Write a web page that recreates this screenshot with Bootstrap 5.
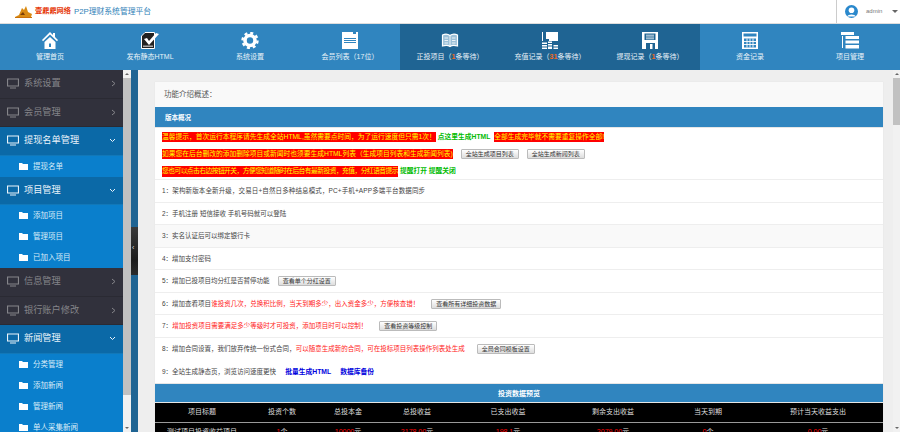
<!DOCTYPE html>
<html lang="zh"><head><meta charset="utf-8">
<link href="https://cdn.jsdelivr.net/npm/bootstrap@5.3.0/dist/css/bootstrap.min.css" rel="stylesheet">
<style>
html,body{height:432px;overflow:hidden}
body{font:7.5px/1.2 "Liberation Sans","Noto Sans CJK SC",sans-serif;color:#333;background:#eee;position:relative}
.top-bar{height:24px;background:#fff;border-bottom:1px solid #ddd;padding-left:15px}
.brand-a{color:#e63a0a;font-size:7.2px;font-weight:700;margin-left:3px}
.brand-b{color:#2f7fb8;font-size:7.8px;margin-left:3px}
.user-box{width:64px;height:23px;border-left:1px solid #ccc;color:#777;font-size:6px;padding-left:8px}
.caret-dn{width:0;height:0;border:3px solid transparent;border-top:3px solid #666;margin:3px 0 0 10px}
.main-nav{height:46px;background:#3085bf}
.nav-cell{width:100px;height:46px;color:#e8f2f8;font-size:7px;padding-top:8px}
.nav-on{background:#1f6493}
.nav-cell svg{display:block;height:17px;width:18px;margin-bottom:4px}
.hot{color:#f26a1b;font-weight:700}
.body-wrap{height:362px}
.side-col{width:123px;overflow:hidden;flex:none}
.sec{height:28.5px;background:#31313c;color:#85858a;font-size:9.2px;padding:0 7px;border-bottom:1px solid #2a2a33}
.sec.open{background:#0b69a7;color:#e9f3fa;border-bottom-color:#1278b8}
.sec svg{flex:none}
.sec-ico{margin-right:5px}
.subs{background:#0a7fcc;color:#d8ecf8;font-size:7.5px}
.sub-item{height:21px;padding-left:19px}
.fold{margin-right:5px}
.sb-v{width:8px;background:#f1f1f1;flex:none;position:relative}
.sb-thumb{position:absolute;left:0;right:0;top:8px;height:317px;background:#c1c1c1}
.sb-page{width:7px;height:362px;background:#f1f1f1;flex:none;position:relative}
.sb-page .sb-thumb{height:47px}
.arr-up,.arr-dn{position:absolute;left:2px;width:0;height:0;border:2px solid transparent}
.arr-up{top:1px;border-bottom:2px solid #666}
.arr-dn{bottom:1px;border-top:2px solid #666}
.strip{width:7px;background:linear-gradient(#1f6493 0,#1f6493 157px,#3a3a3a 157px,#1c1c1c 190px,#2b2b2b 205px,#1f6493 205px);flex:none;color:#ddd;font-size:7px;position:relative}
.strip-mark{position:absolute;left:1px;top:174px;line-height:1}
.work{flex:1;padding:12px 10px 0 17px;overflow:hidden;min-width:0}
.sheet{background:#fff;box-shadow:0 0 1px #ddd}
.sheet-title{height:25px;background:#f9f9f9;padding:0 9px;font-size:7.5px;color:#555;line-height:25px}
.band{height:21px;background:#3085bf;color:#fff;font-weight:700;font-size:6.5px;padding:0 10px;line-height:21px;border-bottom:1px solid #e6e6e6}
.note{height:17.4px;padding:0 7px;font-size:6.75px;white-space:nowrap}
.note-top{height:52px;border-bottom:1px solid #eee}
.redline{background:#f00;color:#ff0;padding:1px 0}
.tight{letter-spacing:-.54px}
.go{color:#0b0;font-weight:700;margin-left:2px}
.pill{background:linear-gradient(#fff,#ddd);border:1px solid #bbb;color:#333;font-size:6px;height:10px;padding:0 4px;line-height:8px;margin-left:8px;border-radius:1px;display:inline-block;white-space:nowrap}
.pill-far{margin-left:12px}
.row-line{height:22.5px;padding:1px 7px 0;border-bottom:1px solid #eee;font-size:6.5px;color:#444;white-space:nowrap}
.row-alt{background:#f9f9f9}
.no-line{border-bottom:0}
.wide-row{letter-spacing:.12px}
.alert-txt{color:#f22}
.blue-link{color:#00d;font-weight:700;margin-left:9px;font-size:6.8px}
.table-title{height:20px;background:#3085bf;color:#fff;font-weight:700;font-size:7px;text-align:center;line-height:20px;border-top:1px solid #e6e6e6;border-bottom:1px solid #e6e6e6}
.data-tb{width:100%;margin:0;table-layout:fixed;font-size:7px;text-align:center}
.data-tb th{background:#000;color:#ddd;height:20px;font-weight:400;padding:0;vertical-align:middle;border-bottom:1px solid #999}
.data-tb td{height:16px;padding:5px 0 2px;background:#000;color:#ddd}
.data-tb th:nth-child(1){width:94px}.data-tb th:nth-child(2){width:66px}.data-tb th:nth-child(3){width:66px}.data-tb th:nth-child(4){width:72px}
.data-tb th:nth-child(5){width:110px}.data-tb th:nth-child(6){width:100px}.data-tb th:nth-child(7){width:90px}
.rd{color:#f00}
.lnk{color:#38c}
</style></head><body>
<header class="top-bar d-flex align-items-center">
<svg width="17" height="12" viewBox="0 0 17 12" aria-hidden="true"><path d="M0 11 4 9 7 2 9 4 11 0 13 6 17 8 16 11Z" fill="#d98a12"/><path d="M5 9 8 6 10 9Z" fill="#7a3d05"/><path d="M0 11h17v1H0Z" fill="#c9700a"/></svg>
<span class="brand-a">壹鼎鼎网络</span><span class="brand-b">P2P理财系统管理平台</span>
<div class="user-box ms-auto d-flex align-items-center">
<svg width="13" height="13" viewBox="0 0 13 13" class="me-2 flex-shrink-0" aria-hidden="true"><circle cx="6.5" cy="6.5" r="6.5" fill="#2a88cc"/><circle cx="6.5" cy="5.3" r="2.8" fill="#fff"/><path d="M2.2 11.5C3 8.8 10 8.8 10.8 11.5Z" fill="#fff"/></svg>
<span>admin</span><i class="caret-dn"></i></div>
</header>
<nav class="main-nav d-flex">
<div class="nav-cell d-flex flex-column align-items-center"><svg viewBox="0 0 18 17"><path d="M9 0 1 8l1 1.200L9 2.600l7 6.600L17 8l-3-3V1h-2v2Z" fill="#fff"/><path d="M3.500 10 9 5l5.500 5v7h-11Zm4.500 1.500V15h2v-3.500Z" fill="#fff" fill-rule="evenodd"/></svg>管理首页</div>
<div class="nav-cell d-flex flex-column align-items-center"><svg viewBox="0 0 18 17"><path d="M4 .5h9.500v16H.5V4Z" fill="#222" stroke="#fff"/><path d="M3 7l3-1 2 3 7-8 3 1-10 11Z" fill="#fff"/><path d="M2 13.500h10V15H2Z" fill="#aaa"/></svg>发布静态HTML</div>
<div class="nav-cell d-flex flex-column align-items-center"><svg viewBox="0 0 18 17"><circle cx="9" cy="8.500" r="5" fill="none" stroke="#fff" stroke-width="3.600"/><circle cx="9" cy="8.500" r="7.500" fill="none" stroke="#fff" stroke-width="2.400" stroke-dasharray="3 2.890"/></svg>系统设置</div>
<div class="nav-cell d-flex flex-column align-items-center"><svg viewBox="0 0 18 17"><path d="M1 0h11v2h3V0h2v17H1Z" fill="#fff"/><path d="M3 6.500h12M3 8.500h12M3 10.500h12" stroke="#3085bf"/></svg>会员列表（17位）</div>
<div class="nav-cell nav-on d-flex flex-column align-items-center"><svg viewBox="0 0 18 17"><path d="M1.500 3c3-1.500 5.500-1 7.500.5C11 2 13.500 1.500 16.500 3v11c-3-1-5.500-1-7.500.5C7 13 4.500 13 1.500 14Z" fill="#9cc0d8" stroke="#fff" stroke-width="1.200"/><path d="M9 3.500v11M3.500 6h3.500M3.500 8.500h3.500M3.500 11h3.500M11 6h3.500M11 8.500h3.500M11 11h3.500" stroke="#fff" stroke-width=".8"/></svg><span>正投项目（<b class="hot">1</b>条等待）</span></div>
<div class="nav-cell nav-on d-flex flex-column align-items-center"><svg viewBox="0 0 18 17"><path d="M1 0h1v9H1ZM5 0h12v9H8V7H5Z" fill="#fff"/><path d="M1 10.500h5v1.500H1Zm0 2.500h5v1.500H1Zm0 2.500h5V17H1ZM7 9.500h4V11H7Zm0 2.500h4v1.500H7Zm0 2.500h4V17H7ZM12.500 13H17v1.500h-4.500Zm0 2.500H17V17h-4.500Z" fill="#fff"/></svg><span>充值记录（<b class="hot">31</b>条等待）</span></div>
<div class="nav-cell nav-on d-flex flex-column align-items-center"><svg viewBox="0 0 18 17"><path d="M1 0h16v17H1Z" fill="#fff"/><path d="M3.500 1.500h11V8h-11Z" fill="#1f6493"/><path d="M5 3.200h8M5 5h8M5 6.800h8" stroke="#fff" stroke-width=".8"/><path d="M5 11h9v6H5Z" fill="#1f6493"/><path d="M9 12h2.500v5H9Z" fill="#fff"/></svg><span>提现记录（<b class="hot">1</b>条等待）</span></div>
<div class="nav-cell d-flex flex-column align-items-center"><svg viewBox="0 0 18 17"><path d="M1 0h16v17H1Z" fill="#fff"/><path d="M2.500 1.500h13v3h-13Z" fill="#3085bf"/><path d="M3 6.500h12v9H3Z" fill="#3085bf"/><path d="M6 6.500v9M9 6.500v9M12 6.500v9M3 9.500h12M3 12.500h12" stroke="#fff" stroke-width=".9"/></svg>资金记录</div>
<div class="nav-cell d-flex flex-column align-items-center"><svg viewBox="0 0 18 17"><path d="M0 0h13v3H0ZM1 4h1v12H1ZM4.500 4H18v3H4.500Zm0 4.500H18v3H4.500Zm0 4.500H18v3.500H4.500Z" fill="#fff"/></svg>项目管理</div>
</nav>
<div class="body-wrap d-flex">
<aside class="side-col">
<div class="sec d-flex align-items-center"><svg width="12" height="11" viewBox="0 0 12 11" class="sec-ico"><path d="M.5 1h11v7H.5ZM3 10h6" fill="none" stroke="currentColor" stroke-width="1.200"/></svg><span class="flex-grow-1">系统设置</span><svg width="5" height="7" viewBox="0 0 5 7"><path d="m1 1 3 2.500-3 2.500" fill="none" stroke="currentColor"/></svg></div>
<div class="sec d-flex align-items-center"><svg width="12" height="11" viewBox="0 0 12 11" class="sec-ico"><path d="M.5 1h11v7H.5ZM3 10h6" fill="none" stroke="currentColor" stroke-width="1.200"/></svg><span class="flex-grow-1">会员管理</span><svg width="5" height="7" viewBox="0 0 5 7"><path d="m1 1 3 2.500-3 2.500" fill="none" stroke="currentColor"/></svg></div>
<div class="sec open d-flex align-items-center"><svg width="12" height="11" viewBox="0 0 12 11" class="sec-ico"><path d="M.5 1h11v7H.5ZM3 10h6" fill="none" stroke="currentColor" stroke-width="1.200"/></svg><span class="flex-grow-1">提现名单管理</span><svg width="7" height="5" viewBox="0 0 7 5"><path d="m1 1 2.500 2.500L6 1" fill="none" stroke="currentColor"/></svg></div>
<div class="subs"><div class="sub-item d-flex align-items-center"><svg width="9" height="7" viewBox="0 0 9 7" class="fold"><path d="M0 0h3l1 1h5v6H0Z" fill="#fff"/></svg>提现名单</div></div>
<div class="sec open d-flex align-items-center"><svg width="12" height="11" viewBox="0 0 12 11" class="sec-ico"><path d="M.5 1h11v7H.5ZM3 10h6" fill="none" stroke="currentColor" stroke-width="1.200"/></svg><span class="flex-grow-1">项目管理</span><svg width="7" height="5" viewBox="0 0 7 5"><path d="m1 1 2.500 2.500L6 1" fill="none" stroke="currentColor"/></svg></div>
<div class="subs"><div class="sub-item d-flex align-items-center"><svg width="9" height="7" viewBox="0 0 9 7" class="fold"><path d="M0 0h3l1 1h5v6H0Z" fill="#fff"/></svg>添加项目</div><div class="sub-item d-flex align-items-center"><svg width="9" height="7" viewBox="0 0 9 7" class="fold"><path d="M0 0h3l1 1h5v6H0Z" fill="#fff"/></svg>管理项目</div><div class="sub-item d-flex align-items-center"><svg width="9" height="7" viewBox="0 0 9 7" class="fold"><path d="M0 0h3l1 1h5v6H0Z" fill="#fff"/></svg>已加入项目</div></div>
<div class="sec d-flex align-items-center"><svg width="12" height="11" viewBox="0 0 12 11" class="sec-ico"><path d="M.5 1h11v7H.5ZM3 10h6" fill="none" stroke="currentColor" stroke-width="1.200"/></svg><span class="flex-grow-1">信息管理</span><svg width="5" height="7" viewBox="0 0 5 7"><path d="m1 1 3 2.500-3 2.500" fill="none" stroke="currentColor"/></svg></div>
<div class="sec d-flex align-items-center"><svg width="12" height="11" viewBox="0 0 12 11" class="sec-ico"><path d="M.5 1h11v7H.5ZM3 10h6" fill="none" stroke="currentColor" stroke-width="1.200"/></svg><span class="flex-grow-1">银行账户修改</span><svg width="5" height="7" viewBox="0 0 5 7"><path d="m1 1 3 2.500-3 2.500" fill="none" stroke="currentColor"/></svg></div>
<div class="sec open d-flex align-items-center"><svg width="12" height="11" viewBox="0 0 12 11" class="sec-ico"><path d="M.5 1h11v7H.5ZM3 10h6" fill="none" stroke="currentColor" stroke-width="1.200"/></svg><span class="flex-grow-1">新闻管理</span><svg width="7" height="5" viewBox="0 0 7 5"><path d="m1 1 2.500 2.500L6 1" fill="none" stroke="currentColor"/></svg></div>
<div class="subs"><div class="sub-item d-flex align-items-center"><svg width="9" height="7" viewBox="0 0 9 7" class="fold"><path d="M0 0h3l1 1h5v6H0Z" fill="#fff"/></svg>分类管理</div><div class="sub-item d-flex align-items-center"><svg width="9" height="7" viewBox="0 0 9 7" class="fold"><path d="M0 0h3l1 1h5v6H0Z" fill="#fff"/></svg>添加新闻</div><div class="sub-item d-flex align-items-center"><svg width="9" height="7" viewBox="0 0 9 7" class="fold"><path d="M0 0h3l1 1h5v6H0Z" fill="#fff"/></svg>管理新闻</div><div class="sub-item d-flex align-items-center"><svg width="9" height="7" viewBox="0 0 9 7" class="fold"><path d="M0 0h3l1 1h5v6H0Z" fill="#fff"/></svg>单人采集新闻</div></div>
</aside>
<div class="sb-v"><i class="arr-up"></i><div class="sb-thumb"></div><i class="arr-dn"></i></div>
<div class="strip"><span class="strip-mark">‹</span></div>
<main class="work">
<div class="sheet">
<div class="sheet-title">功能介绍概述：</div>
<div class="band">版本概况</div>
<div class="note-top">
<div class="note d-flex align-items-center"><span class="redline">温馨提示，首次运行本程序请先生成全站HTML,虽然需要点时间，为了运行速度但只需1次！</span><span class="go">点这里生成HTML</span><span class="redline ms-1">全部生成完毕就不需要重复操作全部!</span></div>
<div class="note d-flex align-items-center"><span class="redline">如果您在后台删改的添加删除项目或新闻时也须要生成HTML列表（生成项目列表和生成新闻列表)</span><span class="pill">全站生成项目列表</span><span class="pill">全站生成新闻列表</span></div>
<div class="note d-flex align-items-center"><span class="redline tight">您也可以点击右边按钮开关，方便您知道随时在后台有最新投资，充值，分红语音提示</span><span class="go">提醒打开 提醒关闭</span></div>
</div>
<div class="row-line wide-row d-flex align-items-center">1：架构新版本全新升级，交易日+自然日多种结息模式，PC+手机+APP多端平台数据同步</div>
<div class="row-line d-flex align-items-center">2：手机注册 短信接收 手机号码就可以登陆</div>
<div class="row-line row-alt d-flex align-items-center">3：实名认证后可以绑定银行卡</div>
<div class="row-line d-flex align-items-center">4：增加支付密码</div>
<div class="row-line d-flex align-items-center">5：增加已投项目均分红是否暂停功能<span class="pill">查看单个分红设置</span></div>
<div class="row-line d-flex align-items-center">6：增加查看项目<span class="alert-txt">谁投资几次，兑换积比例，当天到期多少，出入资金多少，方便核查错！</span><span class="pill pill-far">查看所有详细投资数据</span></div>
<div class="row-line d-flex align-items-center">7：<span class="alert-txt">增加投资项目需要满足多少等级时才可投资，添加项目时可以控制！</span><span class="pill pill-far">查看投资等级控制</span></div>
<div class="row-line no-line d-flex align-items-center">8：增加合同设置，我们放弃传统一份式合同，<span class="alert-txt">可以随意生成新的合同，可在投标项目列表操作列表处生成</span><span class="pill pill-far">全局合同模板设置</span></div>
<div class="row-line no-line d-flex align-items-center">9：全站生成静态页，浏览访问速度更快<span class="blue-link">批量生成HTML</span><span class="blue-link">数据库备份</span></div>
<div class="table-title">投资数据预览</div>
<table class="table data-tb"><thead><tr><th>项目标题</th><th>投资个数</th><th>总投本金</th><th>总投收益</th><th>已支出收益</th><th>剩余支出收益</th><th>当天到期</th><th>预计当天收益支出</th></tr></thead>
<tbody><tr><td class="lnk">测试项目投资收益项目</td><td><span class="rd">1</span>个</td><td><span class="rd">10000</span>元</td><td><span class="rd">2178.00</span>元</td><td><span class="rd">198.1</span>元</td><td><span class="rd">2079.00</span>元</td><td><span class="rd">0</span>个</td><td><span class="rd">0.00</span>元</td></tr></tbody></table>
</div></main>
<div class="sb-page"><i class="arr-up"></i><div class="sb-thumb"></div><i class="arr-dn"></i></div>
</div>
</body></html>
